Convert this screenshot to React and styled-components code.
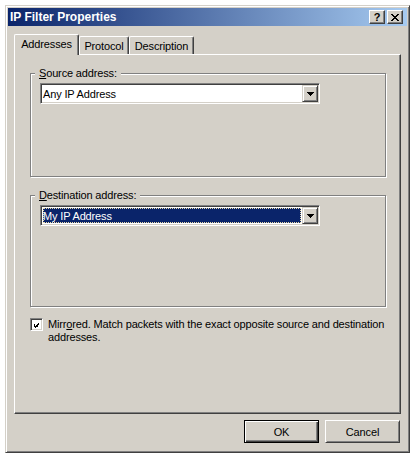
import styled, { createGlobalStyle } from "styled-components";

const GlobalStyle = createGlobalStyle`
body{
  margin:0;
  background:#fff;
  font-family:"Liberation Sans", Arial, sans-serif;
  font-size:11px;
  color:#000;
}
`;

function CheckMark(){
    return(
        <svg width="7" height="7" viewBox="0 0 7 7" shapeRendering="crispEdges">
            <path fill="#000" d="M6 0h1v1h-1z M5 1h2v1h-2z M0 2h1v1h-1z M4 2h3v1h-3z M0 3h2v1h-2z M3 3h3v1h-3z M0 4h5v1h-5z M1 5h3v1h-3z M2 6h1v1h-1z"/>
        </svg>
    );
}

function CloseGlyph(){
    return(
        <svg width="8" height="7" viewBox="0 0 8 7" shapeRendering="crispEdges">
            <path fill="#000" d="M0 0h2v1h-2z M6 0h2v1h-2z M1 1h2v1h-2z M5 1h2v1h-2z M2 2h4v1h-4z M3 3h2v1h-2z M2 4h4v1h-4z M1 5h2v1h-2z M5 5h2v1h-2z M0 6h2v1h-2z M6 6h2v1h-2z"/>
        </svg>
    );
}

function DownArrow(){
    return(
        <svg width="7" height="4" viewBox="0 0 7 4" shapeRendering="crispEdges">
            <path fill="#000" d="M0 0h7v1h-7z M1 1h5v1h-5z M2 2h3v1h-3z M3 3h1v1h-1z"/>
        </svg>
    );
}

function ComboBox({ value, selected }){
    return(
        <Combo>
            <ComboField>
                {selected ? <Selection>{value}</Selection> : <PlainValue>{value}</PlainValue>}
            </ComboField>
            <DropButton><DownArrow/></DropButton>
        </Combo>
    );
}

export default function App(){
    return(
        <>
        <GlobalStyle/>
        <Window>
            <TitleBar>
                <Title>IP Filter Properties</Title>
                <TitleButton $gap>?</TitleButton>
                <TitleButton><CloseGlyph/></TitleButton>
            </TitleBar>
            <Body>
                <TabStrip>
                    <Tab $active $w={65}>Addresses</Tab>
                    <Tab $w={50}>Protocol</Tab>
                    <Tab $w={65}>Description</Tab>
                </TabStrip>
                <Panel>
                    <GroupBox $h={110}>
                        <Legend><u>S</u>ource address:</Legend>
                        <ComboBox value="Any IP Address"/>
                    </GroupBox>
                    <GroupBox $h={118} $top={12}>
                        <Legend><u>D</u>estination address:</Legend>
                        <ComboBox value="My IP Address" selected/>
                    </GroupBox>
                    <CheckRow>
                        <CheckBox><CheckMark/></CheckBox>
                        <CheckLabel>Mirr<u>o</u>red. Match packets with the exact opposite source and destination addresses.</CheckLabel>
                    </CheckRow>
                </Panel>
                <ButtonRow>
                    <PushButton $default>OK</PushButton>
                    <PushButton>Cancel</PushButton>
                </ButtonRow>
            </Body>
        </Window>
        </>
    );
}

const Window = styled.div`
margin:5px 0 0 5px;
width:405px;
height:448px;
box-sizing:border-box;
background:#d4d0c8;
border:1px solid;
border-color:#d4d0c8 #404040 #404040 #d4d0c8;
box-shadow:inset 1px 1px #fff, inset -1px -1px #808080;
padding:2px;
display:flex;
flex-direction:column;
`;

const TitleBar = styled.div`
height:18px;
flex-shrink:0;
display:flex;
align-items:center;
padding:0 4px 0 2px;
background:linear-gradient(to right, #0a246a, #a6caf0);
`;

const Title = styled.div`
flex:1;
color:#fff;
font-weight:bold;
font-size:12px;
white-space:nowrap;
`;

const TitleButton = styled.div`
width:16px;
height:14px;
box-sizing:border-box;
margin-right:${p => p.$gap ? "2px" : "0"};
background:#d4d0c8;
border:1px solid;
border-color:#fff #404040 #404040 #fff;
box-shadow:inset -1px -1px #808080;
display:flex;
align-items:center;
justify-content:center;
font-weight:bold;
font-size:11px;
line-height:11px;
`;

const Body = styled.div`
flex:1;
display:flex;
flex-direction:column;
padding:8px 6px 0 6px;
letter-spacing:-0.15px;
`;

const TabStrip = styled.div`
height:20px;
display:flex;
align-items:flex-end;
position:relative;
z-index:1;
`;

const Tab = styled.div`
width:${p => p.$w}px;
height:${p => p.$active ? 21 : 18}px;
margin-bottom:${p => p.$active ? "-1px" : "0"};
box-sizing:border-box;
background:#d4d0c8;
border-top:1px solid #fff;
border-left:1px solid #fff;
border-right:1px solid #404040;
box-shadow:inset -1px 0 #808080;
border-radius:2px 2px 0 0;
display:flex;
align-items:center;
justify-content:center;
padding-bottom:${p => p.$active ? "2px" : "0"};
white-space:nowrap;
`;

const Panel = styled.div`
height:360px;
box-sizing:border-box;
border:1px solid;
border-color:#fff #404040 #404040 #fff;
box-shadow:inset -1px -1px #808080;
padding:12px 14px 0 15px;
display:flex;
flex-direction:column;
`;

const GroupBox = styled.fieldset`
margin:${p => p.$top || 0}px 0 0 0;
padding:0 9px;
min-width:0;
height:${p => p.$h}px;
box-sizing:border-box;
border:1px solid #808080;
box-shadow:1px 1px #fff, inset 1px 1px #fff;
`;

const Legend = styled.legend`
margin-left:-5px;
padding:0 4px;
line-height:13px;
background:#d4d0c8;
`;

const Combo = styled.div`
width:280px;
height:21px;
margin-top:3px;
box-sizing:border-box;
border:1px solid;
border-color:#808080 #fff #fff #808080;
box-shadow:inset 1px 1px #404040, inset -1px -1px #d4d0c8;
padding:1px;
display:flex;
`;

const ComboField = styled.div`
flex:1;
display:flex;
background:#fff;
`;

const PlainValue = styled.span`
flex:1;
display:flex;
align-items:center;
padding-left:1px;
`;

const Selection = styled.span`
flex:1;
display:flex;
align-items:center;
margin:1px;
background:#0a246a;
color:#fff;
outline:1px dotted #e8d8a8;
outline-offset:-1px;
`;

const DropButton = styled.div`
width:16px;
height:17px;
box-sizing:border-box;
background:#d4d0c8;
border:1px solid;
border-color:#d4d0c8 #404040 #404040 #d4d0c8;
box-shadow:inset 1px 1px #fff, inset -1px -1px #808080;
display:flex;
align-items:center;
justify-content:center;
`;

const CheckRow = styled.div`
margin-top:11px;
display:flex;
align-items:flex-start;
gap:5px;
`;

const CheckBox = styled.div`
width:13px;
height:13px;
flex-shrink:0;
box-sizing:border-box;
padding:3px;
background:#fff;
border:1px solid;
border-color:#808080 #fff #fff #808080;
box-shadow:inset 1px 1px #404040, inset -1px -1px #d4d0c8;
display:flex;
`;

const CheckLabel = styled.div`
width:342px;
line-height:13px;
`;

const ButtonRow = styled.div`
display:flex;
justify-content:flex-end;
gap:6px;
padding:6px 1px 0 0;
`;

const PushButton = styled.button`
width:75px;
height:23px;
box-sizing:border-box;
padding:0;
background:#d4d0c8;
font-family:"Liberation Sans", Arial, sans-serif;
font-size:11px;
letter-spacing:-0.15px;
color:#000;
border:1px solid;
border-color:${p => p.$default ? "#000" : "#fff #404040 #404040 #fff"};
box-shadow:${p => p.$default
    ? "inset 1px 1px #fff, inset -1px -1px #404040, inset -2px -2px #808080"
    : "inset 1px 1px #d4d0c8, inset -1px -1px #808080"};
`;
